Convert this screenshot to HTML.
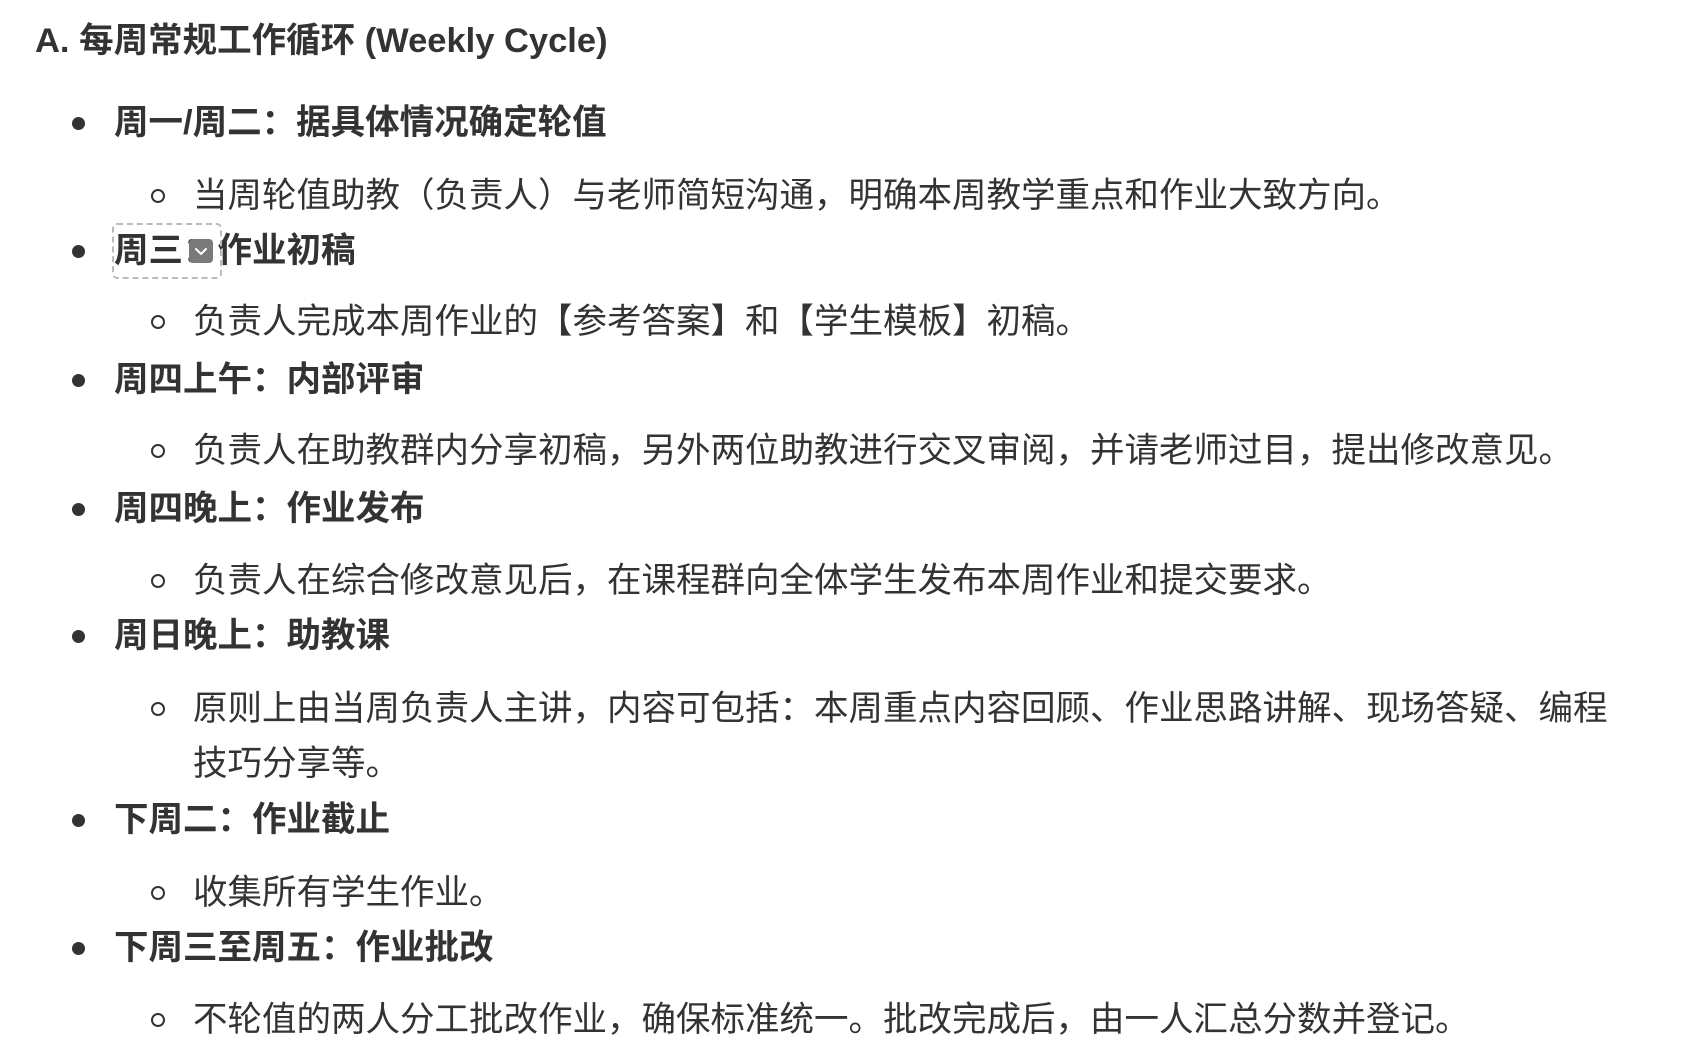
<!DOCTYPE html>
<html><head><meta charset="utf-8"><style>
html,body{margin:0;padding:0;background:#fff;}
body{width:1688px;height:1064px;position:relative;overflow:hidden;font-family:"Liberation Sans","Noto Sans CJK SC",sans-serif;color:#333;}
.l{position:absolute;line-height:55px;height:55px;font-size:34.5px;white-space:nowrap;}
.b{font-weight:700;left:114px;}
.s{left:193px;}
.h{left:35px;font-weight:700;font-size:34.5px;}
.dot{position:absolute;left:72px;width:13px;height:13px;border-radius:50%;background:#333;}
.cir{position:absolute;left:151px;width:10px;height:10px;border-radius:50%;border:2.6px solid #333;}
.box{position:absolute;left:112px;top:223px;width:106px;height:52px;border:2px dashed #bbb;border-radius:5px;}
.ic{position:absolute;left:189px;top:239px;width:24px;height:24px;border-radius:4px;background:#7a7a7a;}
</style></head><body>
<div class="l h" style="top:14px">A. 每周常规工作循环 (Weekly Cycle)</div>

<div class="dot" style="top:117px"></div>
<div class="l b" style="top:96px">周一/周二：据具体情况确定轮值</div>
<div class="cir" style="top:189px"></div>
<div class="l s" style="top:169px">当周轮值助教（负责人）与老师简短沟通，明确本周教学重点和作业大致方向。</div>

<div class="dot" style="top:245px"></div>
<div class="l b" style="top:224px">周三：作业初稿</div>
<div class="box"></div>
<div class="ic"><svg width="24" height="24" viewBox="0 0 24 24"><path d="M7 10l5 5 5-5" fill="none" stroke="#fff" stroke-width="2" stroke-linecap="round" stroke-linejoin="round"/></svg></div>
<div class="cir" style="top:315px"></div>
<div class="l s" style="top:295px">负责人完成本周作业的【参考答案】和【学生模板】初稿。</div>

<div class="dot" style="top:374px"></div>
<div class="l b" style="top:353px">周四上午：内部评审</div>
<div class="cir" style="top:444px"></div>
<div class="l s" style="top:424px">负责人在助教群内分享初稿，另外两位助教进行交叉审阅，并请老师过目，提出修改意见。</div>

<div class="dot" style="top:503px"></div>
<div class="l b" style="top:482px">周四晚上：作业发布</div>
<div class="cir" style="top:574px"></div>
<div class="l s" style="top:554px">负责人在综合修改意见后，在课程群向全体学生发布本周作业和提交要求。</div>

<div class="dot" style="top:630px"></div>
<div class="l b" style="top:609px">周日晚上：助教课</div>
<div class="cir" style="top:702px"></div>
<div class="l s" style="top:682px">原则上由当周负责人主讲，内容可包括：本周重点内容回顾、作业思路讲解、现场答疑、编程</div>
<div class="l s" style="top:737px">技巧分享等。</div>

<div class="dot" style="top:814px"></div>
<div class="l b" style="top:793px">下周二：作业截止</div>
<div class="cir" style="top:886px"></div>
<div class="l s" style="top:866px">收集所有学生作业。</div>

<div class="dot" style="top:942px"></div>
<div class="l b" style="top:921px">下周三至周五：作业批改</div>
<div class="cir" style="top:1013px"></div>
<div class="l s" style="top:993px">不轮值的两人分工批改作业，确保标准统一。批改完成后，由一人汇总分数并登记。</div>
</body></html>
